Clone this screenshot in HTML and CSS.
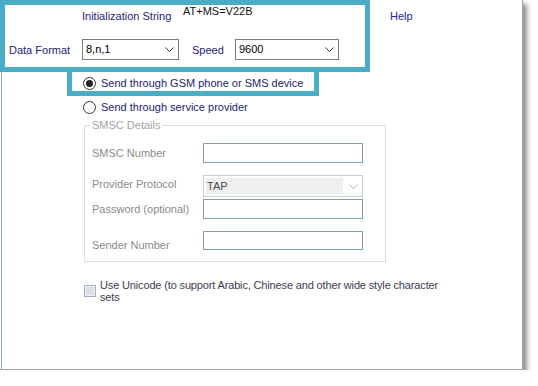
FILE: index.html
```html
<!DOCTYPE html>
<html>
<head>
<meta charset="utf-8">
<link rel="stylesheet" href="styles.css">
</head>
<body>
<div class="window">
  <div class="top">
    <div class="hl hl-main">
      <div class="row-init">
        <span class="init-lbl navy">Initialization String</span>
        <span class="init-val">AT+MS=V22B</span>
      </div>
      <div class="row-fmt">
        <span class="fmt-lbl navy">Data Format</span>
        <div class="combo combo-fmt"><span>8,n,1</span><svg class="chev" width="9" height="5" viewBox="0 0 9 5"><polyline points="0.5,0.5 4.5,4.5 8.5,0.5" /></svg></div>
        <span class="speed-lbl navy">Speed</span>
        <div class="combo combo-speed"><span>9600</span><svg class="chev" width="9" height="5" viewBox="0 0 9 5"><polyline points="0.5,0.5 4.5,4.5 8.5,0.5" /></svg></div>
      </div>
    </div>
    <span class="help">Help</span>
  </div>
  <div class="hl hl-radio">
    <div class="radio-row radio-row-1"><span class="radio on"></span><span class="radio-txt">Send through GSM phone or SMS device</span></div>
  </div>
  <div class="radio-row radio-row-2"><span class="radio"></span><span class="radio-txt">Send through service provider</span></div>
  <fieldset class="smsc">
    <legend>SMSC Details</legend>
    <div class="f-row r1"><span class="f-lbl">SMSC Number</span><div class="input"></div></div>
    <div class="f-row r2"><span class="f-lbl">Provider Protocol</span><div class="combo combo-dis"><span class="fill">TAP</span><svg class="chev chev-dis" width="9" height="5" viewBox="0 0 9 5"><polyline points="0.5,0.5 4.5,4.5 8.5,0.5" /></svg></div></div>
    <div class="f-row r3"><span class="f-lbl">Password (optional)</span><div class="input"></div></div>
    <div class="f-row r4"><span class="f-lbl">Sender Number</span><div class="input input-s"></div></div>
  </fieldset>
  <div class="unicode">
    <span class="cb"></span>
    <span class="cb-txt">Use Unicode (to support Arabic, Chinese and other wide style character<br>sets</span>
  </div>
</div>
</body>
</html>
```

FILE: styles.css
```css
html, body {
  margin: 0;
  padding: 0;
  background: #fff;
}
body {
  font-family: "Liberation Sans", Arial, sans-serif;
  font-size: 11px;
  line-height: 13px;
}
.window {
  width: 522px;
  height: 369px;
  background: #fff;
  border-right: 1px solid #a3a3a3;
  border-bottom: 1px solid #a3a3a3;
  box-shadow: inset 1px 0 0 #fff, inset 2px 0 0 #8fa8c8, 4px 4px 5px rgba(0, 0, 0, 0.45);
}
.navy { color: #24247a; }
.top {
  display: flex;
  align-items: flex-start;
}
.hl {
  border: 5px solid #4aadc6;
  box-sizing: border-box;
}
.hl-main {
  width: 370px;
  height: 72px;
}
.row-init {
  display: flex;
  align-items: flex-start;
  height: 34px;
  padding-left: 77px;
}
.init-lbl {
  width: 101px;
  margin-top: 5px;
}
.init-val {
  color: #111;
}
.row-fmt {
  display: flex;
  align-items: center;
  height: 21px;
  padding-left: 4px;
}
.fmt-lbl {
  width: 73px;
  margin-top: 2px;
}
.speed-lbl {
  width: 43px;
  margin-left: 13px;
  margin-top: 2px;
}
.combo {
  display: flex;
  align-items: center;
  justify-content: space-between;
  box-sizing: border-box;
  height: 21px;
  border: 1px solid #7a7a7a;
  padding: 0 4px 0 3px;
  color: #000;
  background: #fff;
}
.combo-fmt { width: 97px; }
.combo-speed { width: 104px; }
.chev polyline {
  fill: none;
  stroke: #3a3a3a;
  stroke-width: 1;
}
.help {
  margin-left: 20px;
  margin-top: 10px;
  color: #2323a0;
}
.hl-radio {
  width: 252px;
  height: 29px;
  margin-left: 67px;
  margin-top: -5px;
}
.radio-row {
  display: flex;
  align-items: center;
  box-sizing: border-box;
  color: #1c1c78;
}
.radio-row-1 {
  height: 19px;
  padding-top: 4px;
  padding-left: 11px;
}
.radio-row-2 {
  height: 22px;
  padding-left: 83px;
}
.radio {
  width: 13px;
  height: 13px;
  box-sizing: border-box;
  border: 1px solid #333;
  border-radius: 50%;
  background: #fff;
  display: flex;
  align-items: center;
  justify-content: center;
  flex: none;
}
.radio.on::after {
  content: "";
  width: 7px;
  height: 7px;
  border-radius: 50%;
  background: #222;
}
.radio-txt {
  margin-left: 5px;
}
.smsc {
  width: 302px;
  box-sizing: border-box;
  margin: 1px 0 0 84px;
  padding: 11px 0 11px 7px;
  border: 1px solid #dcdcdc;
  min-width: 0;
}
.smsc legend {
  margin-left: -2px;
  padding: 0 2px;
  color: #a3a3a3;
  line-height: 13px;
}
.f-row {
  display: flex;
  align-items: center;
}
.f-lbl {
  width: 111px;
  color: #8a8a8a;
  flex: none;
}
.input {
  width: 160px;
  height: 20px;
  box-sizing: border-box;
  border: 1px solid #7f9db9;
  background: #fff;
}
.r2 { margin-top: 12px; }
.r3 { margin-top: 2px; }
.r4 {
  margin-top: 12px;
  align-items: flex-end;
}
.r4 .f-lbl { margin-bottom: -2px; }
.input-s { height: 19px; }
.r2 .f-lbl { margin-top: -3px; }
.combo-dis {
  width: 160px;
  height: 22px;
  border-color: #cccccc;
  padding: 2px 4px 2px 2px;
}
.fill {
  width: 137px;
  height: 16px;
  box-sizing: border-box;
  background: #efefef;
  padding-left: 1px;
  line-height: 16px;
  color: #4a4a4a;
}
.chev-dis polyline { stroke: #b4b4b4; }
.unicode {
  display: flex;
  align-items: center;
  margin: 17px 0 0 84px;
}
.cb {
  width: 12px;
  height: 12px;
  box-sizing: border-box;
  border: 1px solid #9fb0c8;
  background: #dedede;
  box-shadow: inset 0 0 0 1px #f2f2f2;
  flex: none;
}
.cb-txt {
  margin-left: 4px;
  line-height: 12px;
  color: #3c3c52;
  letter-spacing: -0.15px;
  white-space: nowrap;
}
```
